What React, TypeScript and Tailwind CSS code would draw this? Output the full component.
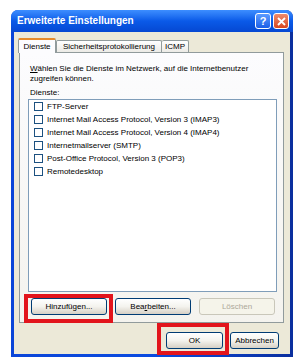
import React from 'react'

const services = [
  'FTP-Server',
  'Internet Mail Access Protocol, Version 3 (IMAP3)',
  'Internet Mail Access Protocol, Version 4 (IMAP4)',
  'Internetmailserver (SMTP)',
  'Post-Office Protocol, Version 3 (POP3)',
  'Remotedesktop',
]

function XpButton({
  children,
  width,
  disabled,
}: {
  children: React.ReactNode
  width: string
  disabled?: boolean
}) {
  return (
    <div
      className={
        disabled
          ? `${width} flex h-[17px] items-center justify-center rounded-[3px] border border-[#c9c7ba] bg-[#f5f4ea] text-[#aca899]`
          : `${width} flex h-[17px] items-center justify-center rounded-[3px] border border-[#003c74] bg-linear-to-b from-white via-[#f4f3ee] to-[#d6d0c5] text-black`
      }
    >
      {children}
    </div>
  )
}

export default function App() {
  return (
    <div className="h-[364px] w-[300px] bg-white pl-[11px] pt-[10px] font-['Liberation_Sans',Arial,sans-serif] text-[8px] leading-[10px]">
      {/* Window */}
      <div className="flex h-[347px] w-[282px] flex-col rounded-t-[7px] bg-linear-to-r from-[#0a45d8] via-[#0a4be0] to-[#0b2f9e]">
        {/* Title bar */}
        <div className="flex h-[22px] items-center rounded-t-[7px] bg-linear-to-b from-[#3d8eff] via-[#0a5ae8] to-[#0648d2] pl-[6px] pr-[4px]">
          <span className="text-[10px] font-bold text-white">Erweiterte Einstellungen</span>
          <div className="ml-auto flex gap-[2px]">
            <div className="flex h-[16px] w-[16px] items-center justify-center rounded-[3px] border border-white bg-linear-to-b from-[#5c9bff] to-[#1c5ee8] text-[11px] font-bold leading-none text-white">
              ?
            </div>
            <div className="flex h-[16px] w-[16px] items-center justify-center rounded-[3px] border border-white bg-linear-to-b from-[#ee8a6a] to-[#d9451c]">
              <svg width="9" height="9" viewBox="0 0 9 9">
                <path d="M1 1 L8 8 M8 1 L1 8" stroke="white" strokeWidth="1.8" />
              </svg>
            </div>
          </div>
        </div>

        {/* Body */}
        <div className="mx-[3px] mb-[3px] flex flex-1 flex-col bg-[#ece9d8] pl-[5px] pt-[6px]">
          {/* Tabs */}
          <div className="flex h-[14px] items-end">
            <div className="relative z-10 -mb-px ml-[-1px] flex h-[15px] w-[38px] items-center justify-center rounded-t-[2px] border border-b-0 border-[#919b9c] border-t-[#e68b2c] border-t-2 bg-[#fcfcfe]">
              Dienste
            </div>
            <div className="flex h-[12px] w-[106px] items-center justify-center rounded-t-[2px] border border-b-0 border-[#919b9c] bg-linear-to-b from-white to-[#ecebe6]">
              Sicherheitsprotokollierung
            </div>
            <div className="flex h-[12px] w-[27px] items-center justify-center rounded-t-[2px] border border-b-0 border-l-0 border-[#919b9c] bg-linear-to-b from-white to-[#ecebe6]">
              ICMP
            </div>
          </div>

          {/* Tab panel */}
          <div className="flex h-[271px] w-[265px] flex-col border border-[#919b9c] bg-linear-to-b from-[#fcfcfe] to-[#f4f3ee] pl-[8px] pr-[5px] pt-[11px]">
            <p className="pl-[2px]">
              <span className="underline">W</span>ählen Sie die Dienste im Netzwerk, auf die Internetbenutzer
              <br />
              zugreifen können.
            </p>
            <p className="mt-[4px] pl-[2px]">Dienste:</p>
            <div className="mt-[1px] h-[193px] w-[249px] border border-[#7f9db9] bg-white pl-[5px]">
              {services.map((s) => (
                <div key={s} className="flex h-[13px] items-center gap-[4px]">
                  <span className="h-[9px] w-[9px] border border-[#1c5180] bg-white" />
                  <span>{s}</span>
                </div>
              ))}
            </div>

            <div className="mt-[6px] flex gap-[8px] pl-[3px]">
              <div className="relative">
                <XpButton width="w-[76px]">Hinzufügen...</XpButton>
                <span className="absolute left-[-7px] top-[-4px] h-[29px] w-[89px] border-[4px] border-[#e2141c]" />
              </div>
              <XpButton width="w-[76px]">
                <span>
                  Bea<span className="underline">r</span>beiten...
                </span>
              </XpButton>
              <XpButton width="w-[76px]" disabled>
                Löschen
              </XpButton>
            </div>
          </div>

          {/* Dialog buttons */}
          <div className="mt-[9px] flex justify-end gap-[7px] pr-[11px]">
            <div className="relative">
              <XpButton width="w-[57px]">OK</XpButton>
              <span className="absolute left-[-9px] top-[-9px] h-[32px] w-[72px] border-[4px] border-[#e2141c]" />
            </div>
            <XpButton width="w-[49px]">Abbrechen</XpButton>
          </div>
        </div>
      </div>
    </div>
  )
}
